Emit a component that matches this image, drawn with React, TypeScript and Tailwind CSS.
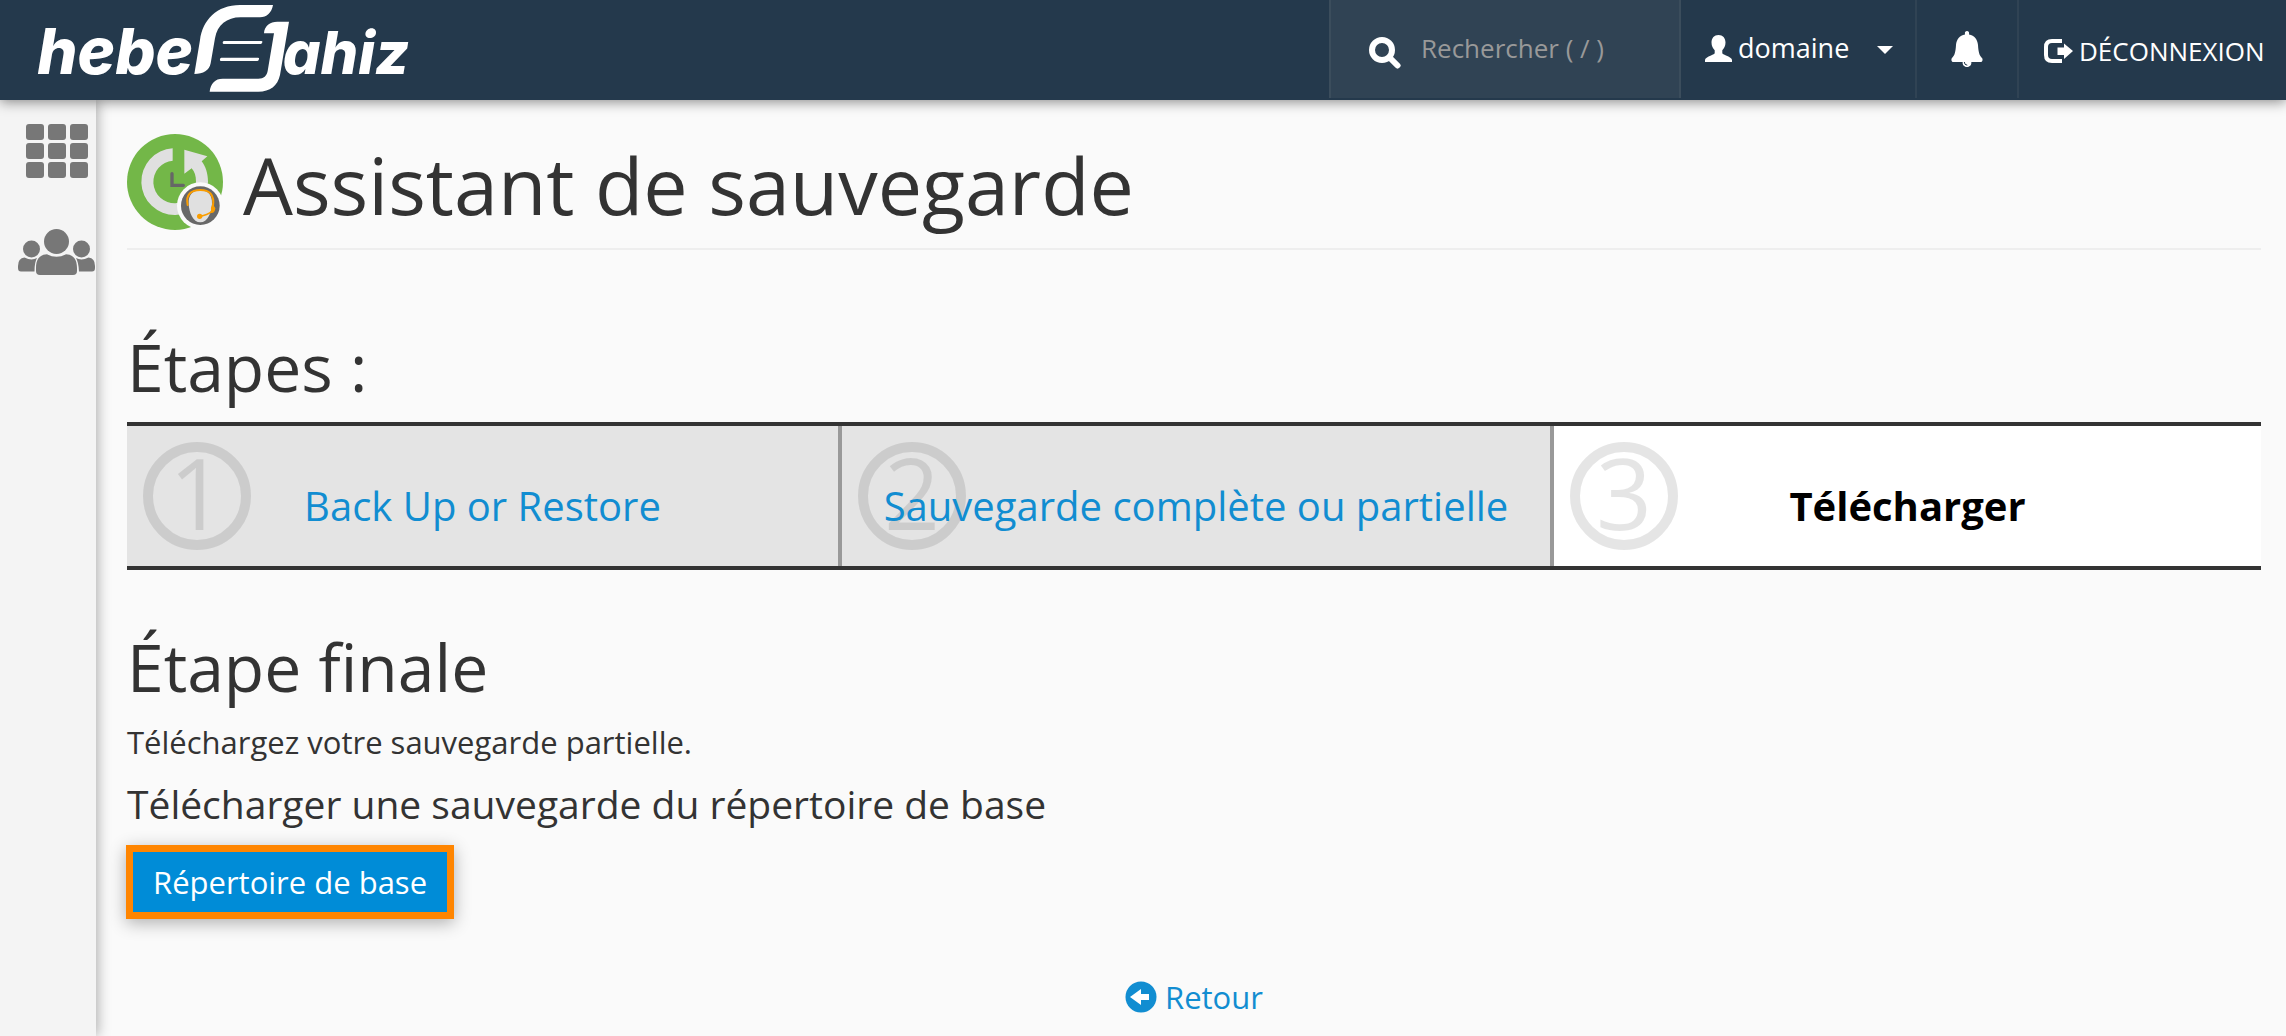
import React from "react";

const STEPS = [
  { number: "1", label: "Back Up or Restore", current: false },
  { number: "2", label: "Sauvegarde complète ou partielle", current: false },
  { number: "3", label: "Télécharger", current: true },
];

function Logo() {
  return (
    <svg viewBox="0 0 1290 300" className="h-[100px] w-[430px] shrink-0" fill="#fff" role="img" aria-label="heberjahiz">
      <text x="112" y="223" fontSize="190" fontWeight="800" fontStyle="italic" fontFamily="Inter, sans-serif">
        hebe
      </text>
      <path d="M583 222 L600 120 C608 60 650 15 720 15 H819 C815 38 800 52 780 52 H722 C680 52 652 75 645 115 L632 190 C628 212 610 222 583 222 Z" />
      <path d="M672 123 H784 Q788 123 787 127 Q786 132 782 132 H672 Q668 132 668 128 Q668 123 672 123 Z" />
      <path d="M664 173 H774 Q778 173 777 177 Q776 183 772 183 H663 Q659 183 660 178 Q660 173 664 173 Z" />
      <path d="M792 100 C793 78 810 65 832 65 H867 L840 225 C833 258 810 275 775 275 H629 C632 250 645 236 668 236 H775 C792 236 800 228 803 213 L822 100 Z" />
      <text x="848" y="223" fontSize="178" fontWeight="800" fontStyle="italic" fontFamily="Inter, sans-serif">
        ahiz
      </text>
    </svg>
  );
}

function SearchIcon() {
  return (
    <svg viewBox="0 0 32 32" className="size-8" fill="none" stroke="#fff" aria-hidden="true">
      <circle cx="13" cy="13" r="10" strokeWidth="6" />
      <path d="M21 21 L28.500 28.500" strokeWidth="6" strokeLinecap="round" />
    </svg>
  );
}

function UserIcon() {
  return (
    <svg viewBox="0 0 27 27" className="size-[27px]" fill="#fff" aria-hidden="true">
      <path d="M13.500 0 C17.800 0 20.500 3 20.500 7.500 C20.500 11 19 13.500 17.300 15.300 V18 C17.300 19 19 19.600 21 20.400 C24.500 21.800 27 23.200 27 25 V27 H0 V25 C0 23.200 2.500 21.800 6 20.400 C8 19.600 9.700 19 9.700 18 V15.300 C8 13.500 6.500 11 6.500 7.500 C6.500 3 9.200 0 13.500 0 Z" />
    </svg>
  );
}

function BellIcon() {
  return (
    <svg viewBox="0 0 32 36" className="h-9 w-8" fill="#fff" aria-hidden="true">
      <path d="M16 0 C17.400 0 18.300 1 18.100 2.300 L18 3.500 C23.500 4.600 26.500 8.500 27 14 C27.400 20 28 24.500 31.200 27.200 C32 28.500 31.500 31 29.500 31 H20.300 C20.800 33.500 19 36 16 36 C13 36 11.200 33.500 11.700 31 H2.500 C0.500 31 0 28.500 0.800 27.200 C4 24.500 4.600 20 5 14 C5.500 8.500 8.500 4.600 14 3.500 L13.900 2.300 C13.700 1 14.600 0 16 0 Z" />
      <path d="M13.300 31 Q13.300 34 16.300 34.200" fill="none" stroke="#24394c" strokeWidth="1" />
    </svg>
  );
}

function LogoutIcon() {
  return (
    <svg viewBox="0 0 29 24" className="h-6 w-[29px]" aria-hidden="true">
      <path d="M18 2 H8 Q2 2 2 8 V16 Q2 22 8 22 H18" fill="none" stroke="#fff" strokeWidth="4" />
      <path d="M13.500 8.500 H20 V4.500 L29 12 L20 20 V16 H13.500 Z" fill="#fff" />
    </svg>
  );
}

function GridIcon() {
  return (
    <svg viewBox="0 0 62 54" className="h-[54px] w-[62px]" fill="#777" aria-hidden="true">
      {[0, 19, 38].map((y) =>
        [0, 22, 44].map((x) => <rect key={x + "-" + y} x={x} y={y} width="18" height="16" rx="3" />)
      )}
    </svg>
  );
}

function UsersIcon() {
  return (
    <svg viewBox="0 0 77 46" className="h-[46px] w-[77px]" fill="#777" aria-hidden="true">
      <circle cx="38.500" cy="12.500" r="12.500" />
      <circle cx="13.500" cy="20" r="8.500" />
      <circle cx="63.500" cy="20" r="8.500" />
      <path d="M29 25.200 Q38.500 30.500 48 25.200 C56 25.500 59 31 59 39 V42 Q59 46 55 46 H22 Q18 46 18 42 V39 C18 31 21 25.500 29 25.200 Z" />
      <path d="M6.500 28.500 Q13.500 32 19 29 Q16.500 33 16.500 42.500 H3 Q0 42.500 0 39 V37 Q0 29 6.500 28.500 Z" />
      <path d="M70.500 28.500 Q63.500 32 58 29 Q60.500 33 61 42.500 H74 Q77 42.500 77 39 V37 Q77 29 70.500 28.500 Z" />
    </svg>
  );
}

function BackupIcon() {
  return (
    <svg viewBox="21 27 288 288" className="size-24 shrink-0 overflow-visible" aria-hidden="true">
      <circle cx="165" cy="171" r="144" fill="#73b748" />
      <path
        d="M158 70 A100 100 0 1 0 264 170 C264 145 257 125 245 109 L262 94 L193 74 V146 L215 130 C224 140 228 152 228 170 A64 64 0 1 1 158 107 Z"
        fill="#e0e0e0"
      />
      <path d="M156 146 V181 H190" fill="none" stroke="#666" strokeWidth="10" strokeLinecap="round" />
      <circle cx="241" cy="242" r="70" fill="#fafafa" />
      <circle cx="241" cy="242" r="58" fill="#686868" />
      <path d="M241 196 C265 196 277 211 276 236 C275 262 263 292 241 292 C219 292 207 262 206 236 C205 211 217 196 241 196 Z" fill="#e0e0e0" />
      <path d="M203 240 C196 208 214 195 241 195 C268 195 284 208 279 244" fill="none" stroke="#fa9d00" strokeWidth="6" strokeLinecap="round" />
      <path d="M278 240 Q272 250 275 262 Q282 262 284 250 Z" fill="#fa9d00" stroke="#fa9d00" strokeWidth="4" />
      <path d="M275 260 Q262 270 240 274" fill="none" stroke="#fa9d00" strokeWidth="5" />
      <circle cx="239" cy="274" r="8" fill="#fa9d00" />
    </svg>
  );
}

function BackIcon() {
  return (
    <svg viewBox="0 0 32 32" className="size-8" aria-hidden="true">
      <circle cx="16" cy="16" r="15.500" fill="#118dd1" />
      <path d="M5 16 L16 8 V13 H24 V19 H16 V24 Z" fill="#fff" />
    </svg>
  );
}

function StepItem({ number, label, current }: { number: string; label: string; current: boolean }) {
  return (
    <li
      aria-current={current ? "step" : undefined}
      className={
        current
          ? "relative flex items-center justify-center bg-white pt-5"
          : "relative flex items-center justify-center border-r-4 border-[#999] bg-[#e4e4e4] pt-5"
      }
    >
      <span
        aria-hidden="true"
        className="absolute left-4 top-4 flex size-[108px] items-center justify-center rounded-full border-[10px] border-black/10 pb-2 text-[98px] leading-none text-black/10"
      >
        {number}
      </span>
      {current ? (
        <strong className="relative font-bold text-black">{label}</strong>
      ) : (
        <a href="#" className="relative text-[#118dd1]">
          {label}
        </a>
      )}
    </li>
  );
}

export default function App() {
  return (
    <div className="flex min-h-screen flex-col bg-[#fafafa] font-['Open_Sans','Noto_Sans',sans-serif] text-[#333]">
      <header className="relative z-20 flex h-[100px] bg-[#24394c] text-[27px] text-white shadow-[0_2px_12px_rgba(0,0,0,0.45)]">
        <Logo />
        <div className="ml-auto flex h-[98px] shrink-0">
          <label className="flex w-[352px] items-center gap-5 border-x-2 border-[#3b4d5c] bg-[#304354] pl-[38px]">
            <span className="pt-2">
              <SearchIcon />
            </span>
            <input
              type="text"
              aria-label="Rechercher"
              placeholder="Rechercher ( / )"
              className="w-full min-w-0 bg-transparent pb-0.5 text-[26px] placeholder:text-[#999] placeholder:opacity-100"
            />
          </label>
          <button type="button" className="flex w-[236px] items-center gap-[6px] border-r-2 border-[#304354] pb-0.5 pl-6">
            <UserIcon />
            <span>domaine</span>
            <svg viewBox="0 0 16 8" className="ml-[22px] mt-1 h-2 w-4" fill="#fff" aria-hidden="true">
              <path d="M0 0 H16 L8 8 Z" />
            </svg>
          </button>
          <button type="button" aria-label="Notifications" className="flex w-[102px] items-center justify-center border-r-2 border-[#304354]">
            <BellIcon />
          </button>
          <a href="#" className="flex w-[267px] items-center gap-[6px] pl-[25px] pt-1 text-[26px]">
            <LogoutIcon />
            DÉCONNEXION
          </a>
        </div>
      </header>

      <div className="flex flex-1">
        <nav className="relative z-10 flex w-24 shrink-0 flex-col items-end gap-[51px] bg-[#f4f4f4] pt-6 shadow-[2px_0_12px_rgba(0,0,0,0.3)]">
          <a href="#" aria-label="Outils" className="pr-2">
            <GridIcon />
          </a>
          <a href="#" aria-label="Utilisateurs" className="pr-px">
            <UsersIcon />
          </a>
        </nav>

        <main className="min-w-0 flex-1 pl-[31px] pr-[25px] pt-[34px]">
          <h1 className="flex items-center gap-5 border-b-2 border-[#eee] pb-[18px] text-[79px] leading-[90px]">
            <BackupIcon />
            <span className="pt-[6px]">Assistant de sauvegarde</span>
          </h1>

          <h2 className="mt-[76px] text-[66px] leading-[80px]">Étapes :</h2>
          <ol className="mt-4 grid h-[148px] grid-cols-[715fr_712fr_707fr] border-y-4 border-[#333] text-[40px]">
            {STEPS.map((step) => (
              <StepItem key={step.number} {...step} />
            ))}
          </ol>

          <h2 className="mt-14 text-[66px] leading-[80px]">Étape finale</h2>
          <p className="mt-4 text-[31px] leading-[40px]">Téléchargez votre sauvegarde partielle.</p>
          <h3 className="mt-[14px] text-[39px] leading-[56px]">Télécharger une sauvegarde du répertoire de base</h3>
          <button
            type="button"
            className="-ml-px mt-[13px] block border-[7px] border-[#ff8500] bg-[#008cd7] px-5 py-[10px] text-[31px] leading-[40px] text-white shadow-[0_4px_16px_rgba(0,0,0,0.3)]"
          >
            Répertoire de base
          </button>

          <div className="mt-[58px] flex justify-center">
            <a href="#" className="flex items-center gap-2 text-[31px] leading-[40px] text-[#118dd1]">
              <BackIcon />
              Retour
            </a>
          </div>
        </main>
      </div>
    </div>
  );
}
